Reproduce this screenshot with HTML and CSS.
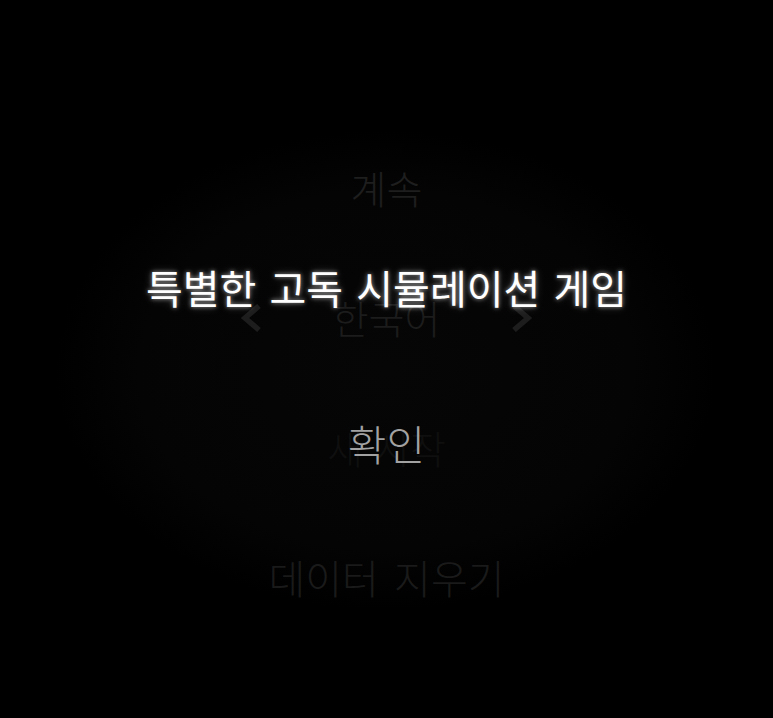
FILE: index.html
```html
<!DOCTYPE html>
<html lang="ko">
<head>
<meta charset="utf-8">
<title>메뉴</title>
<link rel="stylesheet" href="styles.css">
</head>
<body>
<main class="screen">
  <nav class="menu">
    <div class="item">계속</div>
    <div class="item lang">
      <span class="arrow"><svg viewBox="0 0 22 28" width="22" height="28"><path d="M19 2 L5 14 L19 26" fill="none" stroke="currentColor" stroke-width="5.5" stroke-linejoin="miter"/></svg></span>
      <span class="lang-name">한국어</span>
      <span class="arrow"><svg viewBox="0 0 22 28" width="22" height="28"><path d="M3 2 L17 14 L3 26" fill="none" stroke="currentColor" stroke-width="5.5" stroke-linejoin="miter"/></svg></span>
    </div>
    <div class="item dim">새 시작</div>
    <div class="item">데이터 지우기</div>
  </nav>
  <section class="dialog">
    <p class="message">특별한 고독 시뮬레이션 게임</p>
    <button class="confirm">확인</button>
  </section>
</main>
</body>
</html>
```

FILE: styles.css
```css
html, body {
  margin: 0;
  padding: 0;
  height: 100%;
  background: #000;
}
body {
  font-family: "Noto Sans CJK KR", "Noto Sans", sans-serif;
  font-weight: 300;
  overflow: hidden;
}
.screen {
  position: relative;
  width: 773px;
  height: 718px;
  background: radial-gradient(ellipse 330px 240px at 386px 370px, #060606 0%, #040404 75%, #000 100%);
}
.menu {
  display: flex;
  flex-direction: column;
  align-items: center;
  padding-top: 162px;
  gap: 80px;
}
.item {
  font-size: 39px;
  line-height: 50px;
  color: #1e1e1e;
  white-space: nowrap;
}
.item:last-child {
  font-size: 40px;
  word-spacing: 4px;
  color: #1a1a1a;
}
.lang {
  display: flex;
  align-items: center;
  gap: 71px;
  color: #1c1c1c;
}
.lang .arrow {
  display: flex;
  color: #1d1d1d;
  margin-top: 2px;
}
.dim {
  color: #0f0f0f;
}
.dialog {
  position: absolute;
  left: 0;
  right: 0;
  top: 261px;
  display: flex;
  flex-direction: column;
  align-items: center;
}
.message {
  margin: 0;
  font-size: 40px;
  line-height: 52px;
  font-weight: 400;
  color: #fff;
  word-spacing: 2px;
  text-shadow: 0 0 4px rgba(255,255,255,0.55), 0 0 10px rgba(255,255,255,0.25);
}
.confirm {
  margin-top: 104px;
  padding: 0;
  border: 0;
  background: none;
  font-family: inherit;
  font-weight: 300;
  font-size: 42px;
  line-height: 52px;
  color: #a2a2a2;
}
```
